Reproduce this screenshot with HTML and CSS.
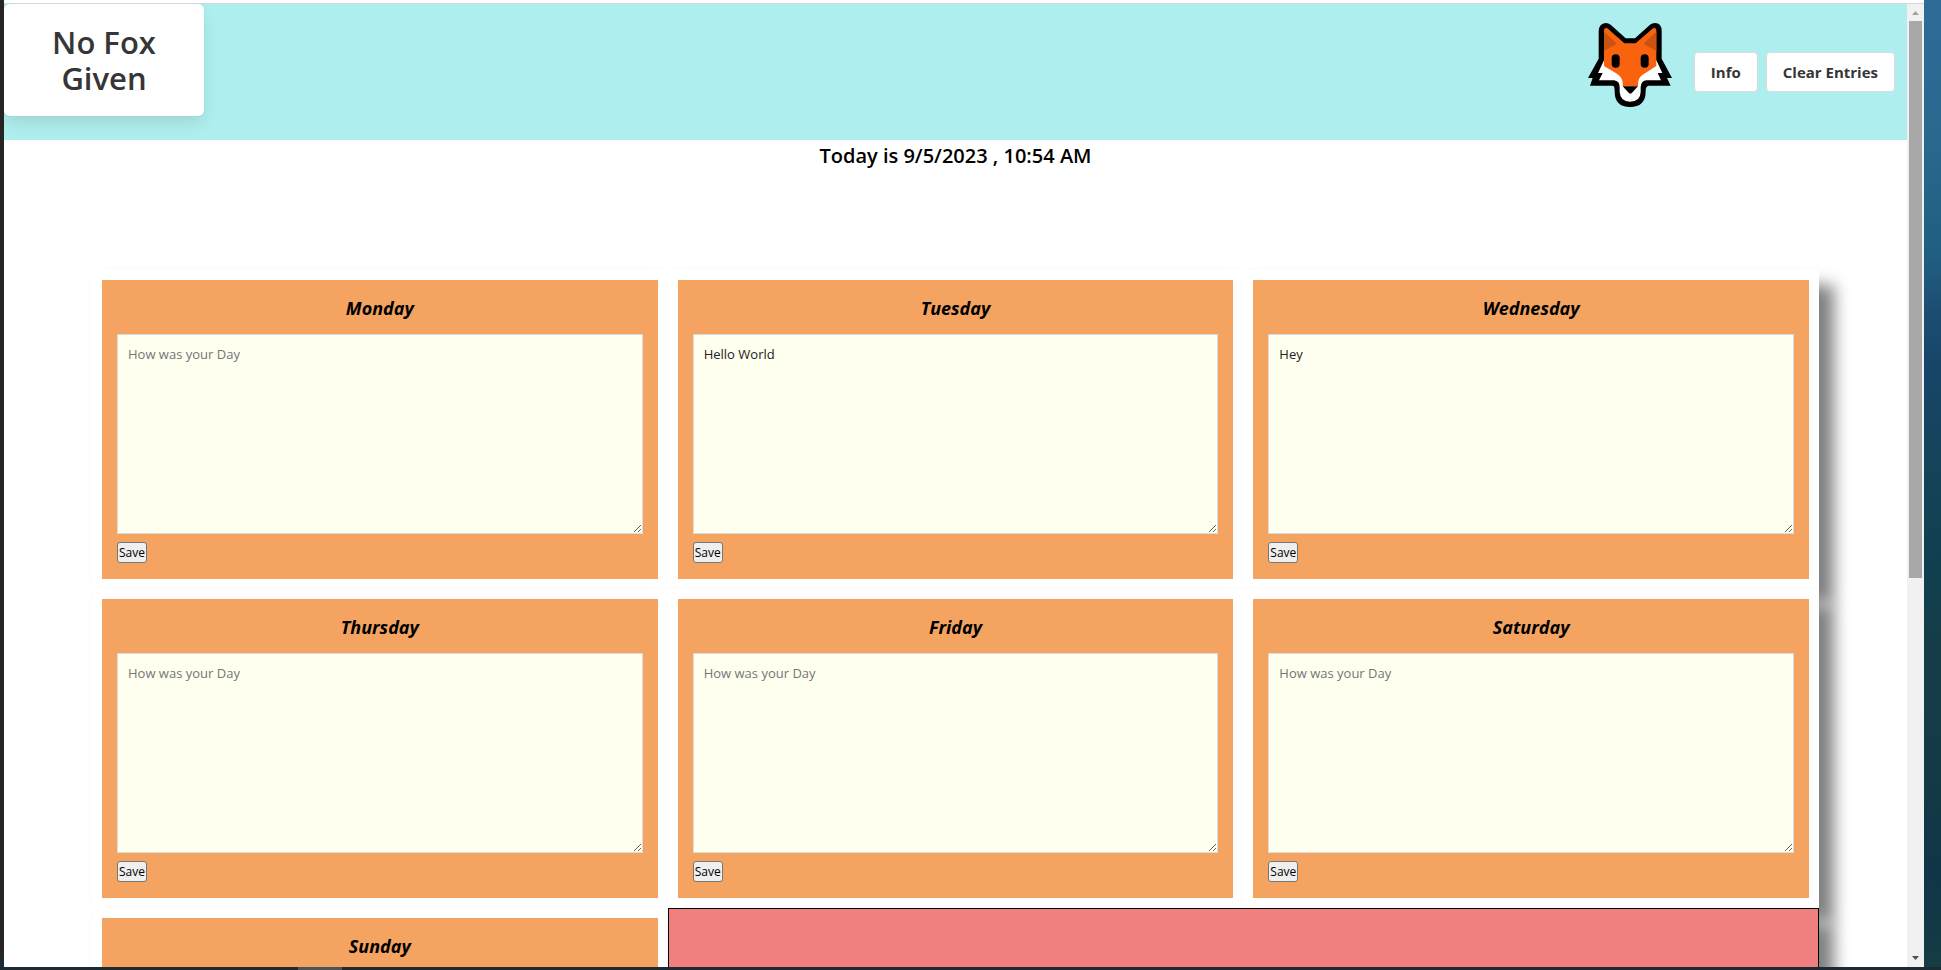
FILE: index.html
```html
<!DOCTYPE html>
<html lang="en">
<head>
<meta charset="utf-8">
<title>No Fox Given</title>
<link rel="stylesheet" href="styles.css">
</head>
<body>
<div class="desktop">
  <div class="window">
    <div class="page">
      <header class="header">
        <h1 class="brand">No Fox Given</h1>
        <div class="actions">
          <svg class="fox" viewBox="27 38 252 252" aria-label="Fox" role="img">
            <path d="M59 145L27 203H41L33 226H102Q107 228 107 238V245Q108 290 153 290Q199 290 200 245V240Q200 228 209 226H275L264 203H279L248 145V62Q248 38 228 38Q219 38 213 43L168 84H140L95 43Q89 38 80 38Q60 40 59 62Z"/>
            <path fill="#fff" d="M75 150L57 188H71L60 210H105Q122 212 122 230V245Q124 274 153 274Q184 274 185 245V230Q187 210 203 210H246L236 188H250L232 150Z"/>
            <path fill="#f9630d" d="M75 60Q76 50 85 54L136 99H170L222 54Q231 50 232 60V167L190 194Q177 203 177 222V228H131V216Q129 201 115 191L75 167Z"/>
            <path fill="#cb5210" d="M75 64L109 96Q113 100 109 103L75 122ZM232 64L198 96Q194 100 198 103L232 122Z"/>
            <rect x="98" y="132" width="24" height="40" rx="12"/>
            <rect x="185" y="132" width="24" height="40" rx="12"/>
            <path d="M131 228H177L159 247Q154 252 149 247Z"/>
          </svg>
          <button class="button" type="button">Info</button>
          <button class="button" type="button">Clear Entries</button>
        </div>
      </header>
      <p class="today">Today is 9/5/2023 , 10:54 AM</p>
      <main class="week">
        <section class="column"><div class="card">
          <h2 class="day"><label for="mon">Monday</label></h2>
          <textarea class="entry" id="mon" placeholder="How was your Day"></textarea>
          <button class="save" type="button">Save</button>
        </div></section>
        <section class="column"><div class="card">
          <h2 class="day"><label for="tue">Tuesday</label></h2>
          <textarea class="entry" id="tue" placeholder="How was your Day">Hello World</textarea>
          <button class="save" type="button">Save</button>
        </div></section>
        <section class="column"><div class="card">
          <h2 class="day"><label for="wed">Wednesday</label></h2>
          <textarea class="entry" id="wed" placeholder="How was your Day">Hey</textarea>
          <button class="save" type="button">Save</button>
        </div></section>
        <section class="column"><div class="card">
          <h2 class="day"><label for="thu">Thursday</label></h2>
          <textarea class="entry" id="thu" placeholder="How was your Day"></textarea>
          <button class="save" type="button">Save</button>
        </div></section>
        <section class="column"><div class="card">
          <h2 class="day"><label for="fri">Friday</label></h2>
          <textarea class="entry" id="fri" placeholder="How was your Day"></textarea>
          <button class="save" type="button">Save</button>
        </div></section>
        <section class="column"><div class="card">
          <h2 class="day"><label for="sat">Saturday</label></h2>
          <textarea class="entry" id="sat" placeholder="How was your Day"></textarea>
          <button class="save" type="button">Save</button>
        </div></section>
        <section class="column"><div class="card">
          <h2 class="day"><label for="sun">Sunday</label></h2>
          <textarea class="entry" id="sun"></textarea>
        </div></section>
        <section class="column column-wide"></section>
      </main>
    </div>
    <div class="scrollbar">
      <svg class="arrow" viewBox="0 0 17 17"><path fill="#a3a3a3" d="M5 11L8.500 7L12 11Z"/></svg>
      <div class="track"><div class="thumb"></div></div>
      <svg class="arrow" viewBox="0 0 17 17"><path fill="#505050" d="M5 6L8.500 10L12 6Z"/></svg>
    </div>
  </div>
  <div class="taskbar"><div class="task"></div></div>
</div>
</body>
</html>
```
FILE: styles.css
```css
* {
  box-sizing: border-box;
  margin: 0;
  padding: 0;
}

body {
  font-family: "Open Sans", "Noto Sans", sans-serif;
  color: #000;
  overflow: hidden;
}

.desktop {
  display: flex;
  flex-direction: column;
  height: 100vh;
  padding-left: 4px;
  padding-right: 17px;
  background:
    linear-gradient(#272524, #272524 98%, #1c2b35 99%) left / 4px 100% no-repeat,
    linear-gradient(#2d6c95, #2a6890 14%, #215f80 26%, #1c4e72 32%, #174568 38%, #15435a 48%, #104050 58%, #153d48 66%, #143a45 80%, #0f3548 90%, #163c44) right / 17px 100% no-repeat;
}

.window {
  display: flex;
  flex: 1;
  min-height: 0;
  padding-top: 3px;
  background: #fff;
}

.page {
  flex: 1;
  overflow: hidden;
  border-top: 1px solid #d5d8d8;
}

.header {
  display: flex;
  justify-content: space-between;
  align-items: flex-start;
  background: #afeeee;
}

.brand {
  width: 200px;
  padding: 20px 40px;
  border-radius: 6px;
  background: #fff;
  box-shadow: 0 8px 16px -2px rgba(10, 10, 10, 0.1), 0 0 0 1px rgba(10, 10, 10, 0.02);
  color: #363636;
  font-size: 31px;
  font-weight: 600;
  line-height: 36px;
  text-align: center;
}

.actions {
  display: flex;
  align-items: center;
  gap: 8px;
  padding: 19px 12px 19px 0;
}

.fox {
  width: 84px;
  height: 84px;
  margin-right: 14px;
  margin-bottom: 14px;
}

.button {
  height: 40px;
  padding: 0 16px;
  border: 1px solid #dbdbdb;
  border-radius: 4px;
  background: #fff;
  color: #363636;
  font: 700 15px "Open Sans", "Noto Sans", sans-serif;
}

.today {
  padding-bottom: 98px;
  font-size: 20px;
  font-weight: 600;
  line-height: 32px;
  text-align: center;
}

.week {
  display: grid;
  grid-template-columns: repeat(3, 1fr);
  margin: 0 88px;
}

.column {
  padding: 10px;
  background: #fff;
  box-shadow: 15px 15px 15px #808080, 0 0 20px rgba(0, 0, 0, 0.01);
}

.column-wide {
  grid-column: span 2;
  border: 1px solid #000;
  background: #f08080;
}

.card {
  padding: 15px;
  background: #f4a460;
}

.day {
  margin-bottom: 12px;
  font-size: 18px;
  font-style: italic;
  font-weight: 700;
  line-height: 27px;
  text-align: center;
}

.entry {
  display: block;
  width: 100%;
  height: 200px;
  padding: 10px;
  border: 1px solid #dbdbdb;
  background: #fffff0;
  color: #222;
  font: 13px/18px "Open Sans", "Noto Sans", sans-serif;
  resize: vertical;
}

.entry::placeholder {
  color: #757575;
}

.save {
  display: block;
  height: 21px;
  margin-top: 8px;
  margin-bottom: 1px;
  border: 1px solid #767676;
  border-radius: 3px;
  padding: 0 1px;
  background: #efefef;
  color: #000;
  font: 12px/18px "Open Sans", "Noto Sans", sans-serif;
}

.scrollbar {
  display: flex;
  flex-direction: column;
  width: 17px;
  background: #f1f1f1;
  border-top: 1px solid #d5d8d8;
}

.arrow {
  width: 17px;
  height: 17px;
}

.track {
  flex: 1;
  padding: 0 2px;
}

.thumb {
  height: 60%;
  background: #a8a8a8;
}

.taskbar {
  height: 3px;
  margin: 0 -17px 0 -4px;
  padding-left: 298px;
  background: #1c2b33;
}

.task {
  width: 44px;
  height: 3px;
  background: #4a545b;
}
```
